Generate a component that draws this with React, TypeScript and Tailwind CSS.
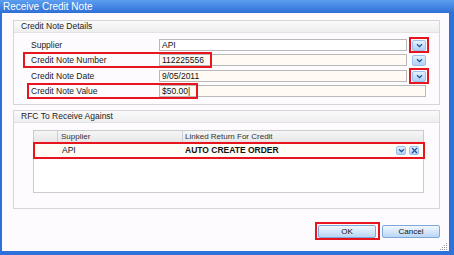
import React from "react";

const FONT = "font-['Liberation_Sans',Arial,sans-serif]";

function Chevron() {
  return (
    <svg width="7" height="5" viewBox="0 0 7 5">
      <path d="M1 1.2 L3.5 3.6 L6 1.2" fill="none" stroke="#1d4f9c" strokeWidth="1.3" />
    </svg>
  );
}

function XMark() {
  return (
    <svg width="7" height="7" viewBox="0 0 7 7">
      <path d="M1 1 L6 6 M6 1 L1 6" fill="none" stroke="#1d4f9c" strokeWidth="1.2" />
    </svg>
  );
}

function DropBtn({ w = 14, h = 11 }: { w?: number; h?: number }) {
  return (
    <div
      className="flex items-center justify-center border border-[#9cc1ea] bg-gradient-to-b from-[#e6f2fd] to-[#afd0f4] rounded-[2px]"
      style={{ width: w, height: h }}
    >
      <Chevron />
    </div>
  );
}

function Red({ l, t, w, h }: { l: number; t: number; w: number; h: number }) {
  return (
    <div
      className="absolute border-2 border-[#e8141e] pointer-events-none"
      style={{ left: l, top: t, width: w, height: h }}
    />
  );
}

function Row({
  label,
  value,
  bg,
  btn,
  fieldW,
  children,
  mt,
}: {
  label: string;
  value: string;
  bg: string;
  btn: boolean;
  fieldW: number;
  children?: React.ReactNode;
  mt: number;
}) {
  return (
    <div className="relative flex items-center h-[12px]" style={{ marginTop: mt }}>
      <div className="w-[145px] pl-[17px] text-[8.5px] leading-none text-[#1a1a1a]">{label}</div>
      <div
        className={`h-[12px] border border-[#b9b9b9] flex items-center pl-[2px] text-[8.5px] leading-none text-[#111] ${bg}`}
        style={{ width: fieldW }}
      >
        {value}
      </div>
      {btn && (
        <div className="ml-[5px]">
          <DropBtn />
        </div>
      )}
      {children}
    </div>
  );
}

export default function App() {
  return (
    <div className={`w-[454px] h-[255px] flex flex-col bg-[#2d72da] ${FONT}`}>
      {/* Title bar */}
      <div className="h-[13px] flex items-center pl-[3px] bg-gradient-to-b from-[#5d9ef0] to-[#2d6fd6]">
        <span className="text-white text-[10px] leading-none">Receive Credit Note</span>
      </div>
      {/* Body */}
      <div className="relative flex-1 ml-[2px] mr-[5px] mb-[4px] bg-[#fdfbfd] flex flex-col pl-[11px] pr-[9px] pt-[7px]">
        {/* Group 1 */}
        <div className="border border-[#d6d6d6] h-[85px] flex flex-col">
          <div className="h-[12px] border-b border-[#e2e2e2] bg-gradient-to-b from-[#fbfafb] to-[#efeeef] flex items-center pl-[7px] text-[8.5px] leading-none text-[#222]">
            Credit Note Details
          </div>
          <Row label="Supplier" value="API" bg="bg-white" btn fieldW={248} mt={6}>
            <Red l={395} t={-2} w={20} h={16} />
          </Row>
          <Row label="Credit Note Number" value="112225556" bg="bg-[#fffbf4]" btn fieldW={248} mt={3}>
            <Red l={9} t={-2} w={189} h={16} />
          </Row>
          <Row label="Credit Note Date" value="9/05/2011" bg="bg-[#fffbf4]" btn fieldW={248} mt={4}>
            <Red l={395} t={-2} w={20} h={16} />
          </Row>
          <Row label="Credit Note Value" value="$50.00|" bg="bg-[#fffbf4]" btn={false} fieldW={267} mt={3}>
            <Red l={13} t={-2} w={171} h={16} />
          </Row>
        </div>
        {/* Group 2 */}
        <div className="mt-[5px] border border-[#d6d6d6] h-[99px] flex flex-col">
          <div className="h-[12px] border-b border-[#e2e2e2] bg-gradient-to-b from-[#fbfafb] to-[#efeeef] flex items-center pl-[7px] text-[8.5px] leading-none text-[#222]">
            RFC To Receive Against
          </div>
          <div className="mt-[7px] ml-[19px] mr-[15px] h-[63px] border border-[#cbcbcb] bg-white flex flex-col">
            <div className="h-[12px] flex border-b border-[#cfcfcf] bg-gradient-to-b from-[#f6f6f6] to-[#e7e7e7] text-[8px] leading-none text-[#333]">
              <div className="w-[24px] border-r border-[#cfcfcf]" />
              <div className="w-[125px] border-r border-[#cfcfcf] flex items-center pl-[3px]">Supplier</div>
              <div className="flex-1 flex items-center pl-[2px]">Linked Return For Credit</div>
            </div>
            <div className="relative h-[14px] flex items-center bg-[#fffdf6] text-[8.5px] leading-none text-[#111]">
              <div className="w-[24px]" />
              <div className="w-[125px] pl-[4px]">API</div>
              <div className="flex-1 pl-[2px] font-bold">AUTO CREATE ORDER</div>
              <div className="flex gap-[3px] mr-[4px]">
                <DropBtn w={10} h={9} />
                <div className="w-[10px] h-[9px] flex items-center justify-center border border-[#9cc1ea] bg-gradient-to-b from-[#e6f2fd] to-[#afd0f4] rounded-[2px]">
                  <XMark />
                </div>
              </div>
              <Red l={-1} t={-1} w={392} h={17} />
            </div>
          </div>
        </div>
        {/* Buttons */}
        <div className="mt-[16px] flex justify-end gap-[6px]">
          <div className="relative">
            <div className="w-[58px] h-[13px] border border-[#7ea8dc] rounded-[2px] bg-gradient-to-b from-[#f1f7fe] to-[#b9d6f6] flex items-center justify-center text-[8px] leading-none text-[#111]">
              OK
            </div>
            <Red l={-3} t={-3} w={65} h={18} />
          </div>
          <div className="w-[58px] h-[13px] border border-[#7ea8dc] rounded-[2px] bg-gradient-to-b from-[#f1f7fe] to-[#b9d6f6] flex items-center justify-center text-[8px] leading-none text-[#111]">
            Cancel
          </div>
        </div>
        {/* Resize grip */}
        <svg className="absolute right-[1px] bottom-[1px]" width="8" height="8" viewBox="0 0 8 8">
          <g fill="#9a9a9a">
            <rect x="6" y="1" width="1" height="1" />
            <rect x="4" y="3" width="1" height="1" />
            <rect x="6" y="3" width="1" height="1" />
            <rect x="2" y="5" width="1" height="1" />
            <rect x="4" y="5" width="1" height="1" />
            <rect x="6" y="5" width="1" height="1" />
            <rect x="0" y="7" width="1" height="1" />
            <rect x="2" y="7" width="1" height="1" />
            <rect x="4" y="7" width="1" height="1" />
            <rect x="6" y="7" width="1" height="1" />
          </g>
        </svg>
      </div>
    </div>
  );
}
